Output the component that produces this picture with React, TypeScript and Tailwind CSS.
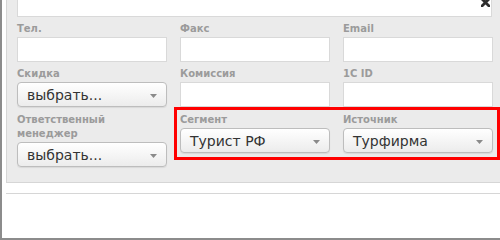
import React from 'react';

const labelCls =
  "block text-[10px] leading-[14px] font-bold text-[#9b9b9b] mb-[1px] [font-family:'DejaVu_Sans',Verdana,sans-serif]";

const TextInput: React.FC = () => (
  <div className="h-[25px] w-full bg-white border border-[#d9d9d9]" />
);

const Select: React.FC<{ value: string }> = ({ value }) => (
  <div className="relative flex h-[25px] w-full items-center rounded-[4px] border border-[#bdbdbd] bg-gradient-to-b from-white to-[#ececec] pl-[9px] pt-[1px] shadow-[0_1px_1px_rgba(0,0,0,0.08)]">
    <span className="text-[14px] leading-none text-[#333] [font-family:'DejaVu_Sans',Verdana,sans-serif]">
      {value}
    </span>
    <svg
      className="absolute right-[9px] top-[11px]"
      width="7"
      height="4"
      viewBox="0 0 7 4"
    >
      <path d="M0 0h7L3.5 4z" fill="#8a8a8a" />
    </svg>
  </div>
);

const Field: React.FC<{ label: React.ReactNode; children: React.ReactNode }> = ({ label, children }) => (
  <div className="flex flex-col">
    <span className={labelCls}>{label}</span>
    {children}
  </div>
);

const App: React.FC = () => {
  return (
    <div className="relative h-[240px] w-[500px] overflow-hidden border-l-2 border-b-2 border-[#8c8c8c] bg-white">
      {/* form panel */}
      <div className="ml-[4px] h-[183px] border-l border-b border-[#d6d6d6] bg-[#ebebeb] pl-[10px]">
        <div className="relative w-[475px]">
          <div className="h-[17px] w-full bg-white border border-t-0 border-[#d9d9d9]" />
          <svg className="absolute left-[464px] top-0" width="9" height="7" viewBox="0 0 9 7">
            <path d="M1 -1L8 6M8 -1L1 6" stroke="#2e2e2e" strokeWidth="2.8" strokeLinecap="square" />
          </svg>
        </div>

        <div className="mt-[5px] grid w-[476px] grid-cols-[150px_150px_150px] gap-x-[13px]">
          <Field label="Тел.">
            <TextInput />
          </Field>
          <Field label="Факс">
            <TextInput />
          </Field>
          <Field label="Email">
            <TextInput />
          </Field>
        </div>

        <div className="mt-[5px] grid w-[476px] grid-cols-[150px_150px_150px] gap-x-[13px]">
          <Field label="Скидка">
            <Select value="выбрать..." />
          </Field>
          <Field label="Комиссия">
            <TextInput />
          </Field>
          <Field label="1C ID">
            <TextInput />
          </Field>
        </div>

        <div className="mt-[6px] grid w-[476px] grid-cols-[150px_150px_150px] items-start gap-x-[13px]">
          <Field
            label={
              <>
                Ответственный
                <br />
                менеджер
              </>
            }
          >
            <Select value="выбрать..." />
          </Field>
          <Field label="Сегмент">
            <Select value="Турист РФ" />
          </Field>
          <Field label="Источник">
            <Select value="Турфирма" />
          </Field>
        </div>
      </div>

      <div className="ml-[4px] mt-[10px] h-[1px] bg-[#d6d6d6]" />

      {/* highlight annotation */}
      <div className="pointer-events-none absolute left-[172px] top-[107px] h-[53px] w-[326px] border-[3px] border-[#ff0000]" />
    </div>
  );
};

export default App;
